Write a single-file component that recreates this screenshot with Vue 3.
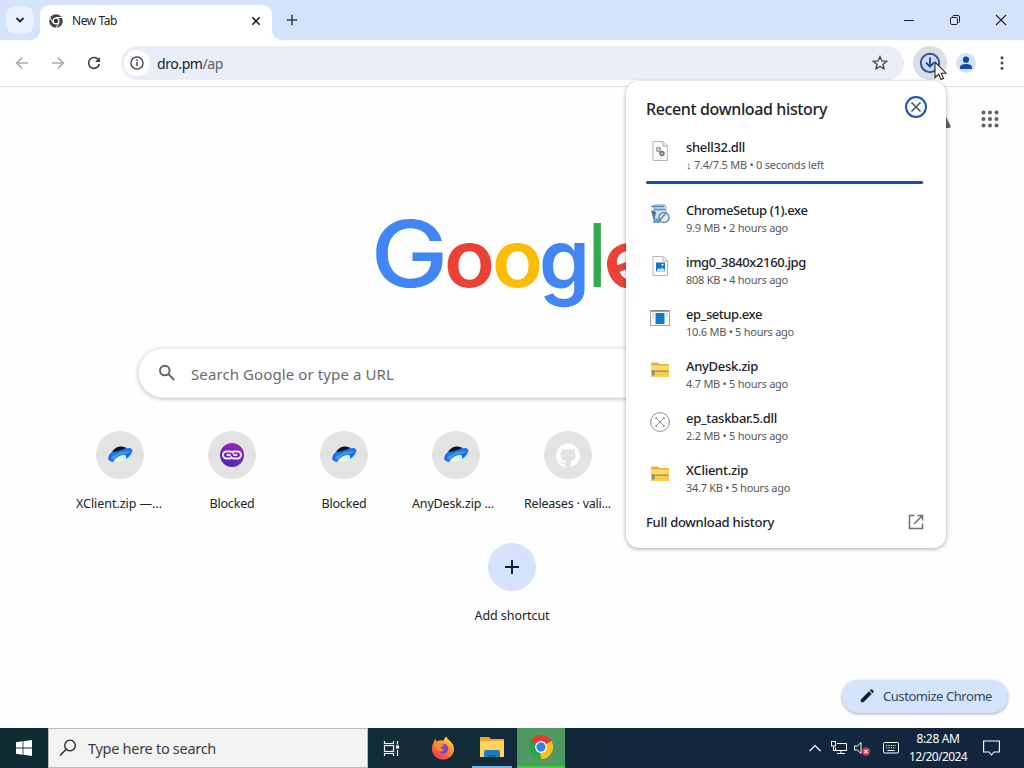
<script setup>
// Spreads a label's letters so that it occupies the given width in pixels.
const vFit = {
  mounted(el, binding) {
    const natural = el.getBoundingClientRect().width
    const count = el.textContent.length
    el.style.letterSpacing = `${(binding.value - natural) / count}px`
  },
}

const files = [
  { name: 'shell32.dll', nw: 59, info: '↓ 7.4/7.5 MB • 0 seconds left', iw: 138, icon: 'dll', progress: 99.6 },
  { name: 'ChromeSetup (1).exe', nw: 121.5, info: '9.9 MB • 2 hours ago', iw: 102, icon: 'setup' },
  { name: 'img0_3840x2160.jpg', nw: 120, info: '808 KB • 4 hours ago', iw: 102, icon: 'jpg' },
  { name: 'ep_setup.exe', nw: 76, info: '10.6 MB • 5 hours ago', iw: 108, icon: 'exe' },
  { name: 'AnyDesk.zip', nw: 72, info: '4.7 MB • 5 hours ago', iw: 102, icon: 'zip' },
  { name: 'ep_taskbar.5.dll', nw: 91, info: '2.2 MB • 5 hours ago', iw: 102, icon: 'blocked' },
  { name: 'XClient.zip', nw: 62, info: '34.7 KB • 5 hours ago', iw: 104, icon: 'zip' },
]
const tiles = [
  { label: 'XClient.zip —...', w: 86, icon: 'disk', cut: true },
  { label: 'Blocked', w: 45, icon: 'link' },
  { label: 'Blocked', w: 45, icon: 'disk' },
  { label: 'AnyDesk.zip ...', w: 82, icon: 'disk', cut: true },
  { label: 'Releases · vali...', w: 87, icon: 'github', cut: true },
]
const dots = [0, 1, 2, 3, 4, 5, 6, 7, 8]
</script>

<template>
  <div class="screen">
    <header class="tabs">
      <div class="tab-search"><svg width="12" height="12" viewBox="0 0 12 12"><path d="M2.5 4l3.5 3.5L9.500 4" fill="none" stroke="#1d2430" stroke-width="1.8" /></svg></div>
      <div class="tab">
        <svg width="14" height="14" viewBox="0 0 14 14">
          <circle cx="7" cy="7" r="6.800" fill="#44474b" /><circle cx="7" cy="7" r="3.500" fill="#fff" /><circle cx="7" cy="7" r="2.200" fill="#34373b" />
          <path d="M7 3.500h6.200M4 8.800L.9 3.500M10 8.800L7 14" stroke="#fff" stroke-width="1" />
        </svg>
        <span v-fit="45" class="tab-title">New Tab</span>
        <svg class="tab-close" width="10" height="10" viewBox="0 0 10 10"><path d="M1.300 1.300l7.400 7.400M8.700 1.300L1.300 8.700" stroke="#23272d" stroke-width="1.600" /></svg>
      </div>
      <svg class="new-tab" width="12" height="12" viewBox="0 0 12 12"><path d="M6 .8v10.400M.8 6h10.400" stroke="#35435d" stroke-width="1.600" /></svg>
      <div class="win">
        <svg width="12" height="12" viewBox="0 0 12 12"><path d="M1 6.500h10" stroke="#17202c" /></svg>
        <svg width="12" height="12" viewBox="0 0 12 12" fill="none" stroke="#17202c"><rect x="1.500" y="3.500" width="7" height="7" rx="1.300" /><path d="M3.500 3V2.500Q3.500 1.500 4.800 1.500H9q1.500 0 1.500 1.500v4.500q0 1-1 1" /></svg>
        <svg width="12" height="12" viewBox="0 0 12 12"><path d="M1 1l10 10M11 1L1 11" stroke="#17202c" stroke-width="1.100" /></svg>
      </div>
    </header>

    <div class="toolbar">
      <div class="nav">
        <svg width="16" height="16" viewBox="0 0 16 16" fill="none" stroke="#abadb0" stroke-width="1.500"><path d="M14 8H2.800M8 2.600L2.600 8 8 13.400" /></svg>
        <svg width="16" height="16" viewBox="0 0 16 16" fill="none" stroke="#abadb0" stroke-width="1.500"><path d="M2 8h11.200M8 2.600L13.400 8 8 13.400" /></svg>
        <svg width="16" height="16" viewBox="0 0 16 16"><path d="M12.600 5.100A5.400 5.400 0 1 0 13.300 9" fill="none" stroke="#3d4043" stroke-width="1.600" /><path d="M14 2v5H9z" fill="#3d4043" /></svg>
      </div>
      <div class="omnibox">
        <div class="site"><svg width="14" height="14" viewBox="0 0 14 14"><circle cx="7" cy="7" r="6.100" fill="none" stroke="#3b3e42" stroke-width="1.300" /><path d="M7 6v4.300M7 3.500v1.400" stroke="#3b3e42" stroke-width="1.400" /></svg></div>
        <span v-fit="66" class="url">dro.pm<i>/ap</i></span>
        <svg class="star" width="16" height="16" viewBox="0 0 16 16"><path d="M8 1.800l1.850 4.150 4.500.45-3.400 3 1 4.450L8 11.500l-3.950 2.350 1-4.450-3.400-3 4.500-.45z" fill="none" stroke="#45484e" stroke-width="1.400" /></svg>
      </div>
      <div class="download">
        <svg width="22" height="22" viewBox="0 0 22 22" fill="none"><circle cx="11" cy="11" r="9.200" stroke="#35528f" stroke-width="1.900" fill="#c9dbfa" /><path d="M11 5.500v9M7 10.700l4 4 4-4" stroke="#28498c" stroke-width="1.900" /></svg>
      </div>
      <div class="person"><svg width="14" height="14" viewBox="0 0 14 14" fill="#164ca8"><circle cx="7" cy="3.700" r="3.100" /><path d="M1 13v-1.800C1 8.800 4 8 7 8s6 .8 6 3.200V13z" /></svg></div>
      <svg class="kebab" width="4" height="14" viewBox="0 0 4 14" fill="#45484c"><circle cx="2" cy="1.700" r="1.500" /><circle cx="2" cy="7" r="1.500" /><circle cx="2" cy="12.300" r="1.500" /></svg>
    </div>

    <main class="page">
      <svg class="apps" width="18" height="18" viewBox="0 0 18 18" fill="#5f6368"><circle v-for="d in dots" :key="d" :cx="2.500 + (d % 3) * 6.500" :cy="2.500 + Math.floor(d / 3) * 6.500" r="2" /></svg>
      <svg class="flask" width="14" height="16" viewBox="0 0 14 16"><path d="M5 0h4v5l4.500 8.500Q14 16 12 16H2Q0 16 .5 13.500L5 5z" fill="#5f6368" /></svg>

      <svg class="logo" width="310" height="180" viewBox="364 167 310 180">
        <text x="370.500" y="287" font-size="92" font-weight="500" fill="#4285f4" textLength="78" lengthAdjust="spacingAndGlyphs">G</text>
        <text x="444" y="287.300" font-size="80" font-weight="600" fill="#ea4335" textLength="51" lengthAdjust="spacingAndGlyphs">o</text>
        <text x="492" y="287.300" font-size="80" font-weight="600" fill="#fbbc05" textLength="51" lengthAdjust="spacingAndGlyphs">o</text>
        <text x="539" y="289" font-size="84" font-weight="600" fill="#4285f4" textLength="51" lengthAdjust="spacingAndGlyphs">g</text>
        <text x="590.500" y="287" font-size="88.500" font-weight="700" fill="#34a853" textLength="13.500" lengthAdjust="spacingAndGlyphs">l</text>
        <text x="604" y="287.300" font-size="80" font-weight="600" fill="#ea4335" textLength="50" lengthAdjust="spacingAndGlyphs" transform="rotate(-20 629 266)">e</text>
      </svg>

      <div class="search">
        <svg width="18" height="18" viewBox="0 0 18 18" fill="none" stroke="#5f6266" stroke-width="1.900"><circle cx="6.800" cy="6.600" r="4.800" /><path d="M10.400 10.200l5.800 5.800" /></svg>
        <span v-fit="203">Search Google or type a URL</span>
      </div>

      <div class="tiles">
        <div v-for="(t, i) in tiles" :key="i" class="tile">
          <div class="disc">
            <svg v-if="t.icon === 'disk'" width="26" height="20" viewBox="0 0 26 20">
              <path d="M1 13Q2 8 7 6t16-3q3 1 2 4-2 5-6 7 .5-4-3-4-7 1-10 7-5-1-5-4z" fill="#1676e5" />
              <path d="M5 7Q8 2 13 1.500q3-.5 7 1.500L14 5q-4 2-9 2z" fill="#07132c" />
              <path d="M4 12q6-5 17-6l2 1q-3 2-6 2-6 0-11 6z" fill="#3a9cf8" />
              <path d="M8 17q1-5 9-7 2 0 2 2-2 3-6 4.500-3 1-5 .5z" fill="#edf5fb" />
            </svg>
            <svg v-else-if="t.icon === 'link'" width="24" height="24" viewBox="0 0 24 24">
              <defs><linearGradient id="violet" x1=".7" y1="0" x2=".2" y2="1"><stop offset="0" stop-color="#a21fb7" /><stop offset="1" stop-color="#3f2fae" /></linearGradient></defs>
              <circle cx="12" cy="12" r="12" fill="url(#violet)" />
              <path d="M10.500 15.500H6.500a3.500 3.500 0 0 1 0-7h4q1.500 0 2.500 1.500M13.500 8.500h4a3.500 3.500 0 0 1 0 7h-4q-1.500 0-2.500-1.500M7.500 12h2.500M14 12h2.500" fill="none" stroke="#f2e7fb" stroke-width="1.900" stroke-linecap="round" />
            </svg>
            <svg v-else width="24" height="24" viewBox="0 0 24 24" fill="#fff"><path d="M12 .5a12 12 0 0 0-3.800 23.400c.6.100.8-.3.800-.6v-2.200c-3.300.7-4-1.400-4-1.400-.6-1.400-1.400-1.800-1.400-1.800-1-.7.100-.7.100-.7 1.200.1 1.900 1.200 1.900 1.200 1 1.900 2.800 1.300 3.500 1 .1-.8.400-1.300.8-1.600-2.700-.3-5.500-1.300-5.500-5.900 0-1.300.5-2.400 1.200-3.200-.1-.3-.5-1.500.1-3.200 0 0 1-.3 3.300 1.200a11.500 11.500 0 0 1 6 0c2.300-1.500 3.300-1.200 3.300-1.200.7 1.700.2 2.900.1 3.200.8.800 1.200 1.900 1.200 3.200 0 4.600-2.800 5.600-5.500 5.900.4.400.8 1.100.8 2.200v3.300c0 .3.200.7.800.6A12 12 0 0 0 12 .5z" /></svg>
          </div>
          <div class="tile-label" :class="{ cut: t.cut }"><span v-fit="t.w">{{ t.label }}</span></div>
        </div>
      </div>
      <div class="tile add">
        <div class="disc"><svg width="14" height="14" viewBox="0 0 14 14"><path d="M7 0v14M0 7h14" stroke="#061d42" stroke-width="1.900" /></svg></div>
        <div class="tile-label"><span v-fit="75">Add shortcut</span></div>
      </div>
      <button class="customize">
        <svg width="14" height="14" viewBox="0 0 14 14" fill="#0d223f"><path d="M.8 10.500L9 2.300 11.700 5 3.500 13.200H.8zM9.800 1.500l1-1q.7-.6 1.400 0l1.300 1.300q.6.700 0 1.400l-1 1z" /></svg>
        <span v-fit="109">Customize Chrome</span>
      </button>
    </main>

    <footer class="taskbar">
      <div class="start"><svg width="16" height="16" viewBox="0 0 16 16" fill="#fff"><path d="M0 2.200L6.600 1.300V7.500H0zM7.400 1.200L16 0v7.500H7.400zM0 8.400h6.600v6.300L0 13.800zM7.400 8.400H16V16l-8.600-1.200z" /></svg></div>
      <div class="find">
        <svg width="18" height="18" viewBox="0 0 18 18" fill="none" stroke="#222" stroke-width="1.300"><circle cx="11" cy="6.500" r="5.300" /><path d="M7.200 10.300L1 16.500" /></svg>
        <span v-fit="128">Type here to search</span>
      </div>
      <div class="task view"><svg width="17" height="17" viewBox="0 0 17 17" fill="none" stroke="#eef3f5" stroke-width="1.200"><path d="M1.500 1v2.500h9V1M1.500 16v-2.500h9V16M14.500 1v3.500M14.500 10v6" /><rect x="1.500" y="5.500" width="9" height="6" /><rect x="13.500" y="6" width="2" height="2" fill="#fff" /></svg></div>
      <div class="task fox">
        <svg width="24" height="24" viewBox="0 0 24 24">
          <defs><linearGradient id="flame" x1=".8" y1="0" x2=".2" y2="1"><stop offset="0" stop-color="#ffe44d" /><stop offset=".4" stop-color="#ff9428" /><stop offset="1" stop-color="#f02a5c" /></linearGradient></defs>
          <path d="M3 5.500L4 3l2 2.500q3-2 6.500-.8Q13 2 15.500.5q.5 2 3 4 4.500 3.500 4.500 9A11 10.500 0 0 1 1 13Q.7 9 3 5.500z" fill="url(#flame)" />
          <circle cx="12.300" cy="12.800" r="5" fill="#7c45cc" /><path d="M4 8q3-2 6 0 2.500 0 4 1.500-4 .5-4 2.500.5 1.500 3 1.500-1 2.500-4.500 2Q4 14.500 4 8z" fill="#ff8a2b" />
        </svg>
      </div>
      <div class="task folder">
        <svg width="26" height="24" viewBox="0 0 26 24"><path d="M1 2h9l2 2h13v18H1z" fill="#eba928" /><path d="M1 6h24v16H1z" fill="#ffd461" /><path d="M5 22v-5q0-2 2-2h12q2 0 2 2v5z" fill="#217dc2" /><path d="M9 20h8v2H9z" fill="#14629f" /></svg>
      </div>
      <div class="task chrome">
        <svg width="24" height="24" viewBox="0 0 24 24">
          <path d="M12 12L1.600 6A12 12 0 0 1 22.400 6z" fill="#e33b2e" /><path d="M12 12L22.400 6A12 12 0 0 1 12 24z" fill="#fbc116" /><path d="M12 12v12A12 12 0 0 1 1.600 6z" fill="#2da44e" />
          <path d="M12 6h10.400l-8 4z" fill="#e33b2e" /><path d="M17.200 15L12 24l-1-8z" fill="#fbc116" /><path d="M6.800 15L1.600 6l8 4z" fill="#2da44e" />
          <circle cx="12" cy="12" r="5.900" fill="#fff" /><circle cx="12" cy="12" r="4.700" fill="#3b80ee" />
        </svg>
      </div>
      <div class="tray">
        <svg class="t1" width="12" height="8" viewBox="0 0 12 8" fill="none" stroke="#fff" stroke-width="1.200"><path d="M.5 7L6 1.500 11.500 7" /></svg>
        <svg class="t2" width="17" height="14" viewBox="0 0 17 14" fill="none" stroke="#fff"><path d="M6 2.500h9.500v7H4.500v-3M10 9.500v3M6 12.500h8M2.500 5.500v4h2" /><rect x=".5" y=".5" width="4" height="4.500" /></svg>
        <svg class="t3" width="17" height="15" viewBox="0 0 17 15"><path d="M.5 5h2.800L7 1.500v11L3.300 9H.5z" fill="none" stroke="#fff" /><circle cx="12" cy="10.500" r="4.300" fill="#d8333f" /><path d="M10.300 8.800l3.400 3.400M13.700 8.800l-3.400 3.400" stroke="#fff" stroke-width="1.200" /></svg>
        <svg class="t4" width="16" height="12" viewBox="0 0 16 12" fill="none" stroke="#fff"><rect x=".5" y=".5" width="15" height="10.500" rx="1" /><path d="M3 3.500h10M3 5.800h10" stroke-dasharray="1.200 1.200" /><path d="M4.500 8.500h7" /></svg>
        <div class="clock"><span v-fit="43">8:28 AM</span><span v-fit="58">12/20/2024</span></div>
        <svg class="t5" width="17" height="16" viewBox="0 0 17 16" fill="none" stroke="#fff" stroke-width="1.100"><path d="M.6 1h15.800v11H11l-2.500 3L6 12H.6z" /></svg>
      </div>
    </footer>

    <section class="popup">
      <div class="popup-head">
        <h2 v-fit="181">Recent download history</h2>
        <svg width="24" height="24" viewBox="0 0 24 24"><circle cx="12" cy="12" r="10" fill="#eef8ff" stroke="#2353a5" stroke-width="2" /><path d="M7.500 7.500l9 9M16.500 7.500l-9 9" stroke="#55524f" stroke-width="1.500" /></svg>
      </div>
      <div v-for="f in files" :key="f.name" class="file" :class="{ active: f.progress }">
        <div class="file-icon">
          <svg v-if="f.icon === 'dll'" width="20" height="20" viewBox="0 0 20 20"><path d="M3 .5h10L17.500 5v14.500H3z" fill="#fafafa" stroke="#b5b5b5" /><path d="M13 .5V5h4.500" fill="none" stroke="#aaa" /><circle cx="8.500" cy="8.500" r="1.800" fill="none" stroke="#a0a3a6" stroke-width="1.800" /><circle cx="12" cy="12.500" r="1.800" fill="none" stroke="#777b7e" stroke-width="1.900" /></svg>
          <svg v-else-if="f.icon === 'setup'" width="20" height="20" viewBox="0 0 20 20"><path d="M4 1h11l1 3v11H4z" fill="#c9e0f2" stroke="#8aa5be" /><path d="M1 2.500h13M4 5.500h11" stroke="#5d8bbd" stroke-width="1.500" /><path d="M1 6l5 2-2 9z" fill="#486c9f" /><path d="M4 15h6v4H3z" fill="#6b9fc4" /><circle cx="14" cy="13.500" r="5" fill="#e3ecf4" stroke="#7089bd" stroke-width="1.500" /><path d="M9 17l7-8" stroke="#58a078" stroke-width="1.800" /></svg>
          <svg v-else-if="f.icon === 'jpg'" width="20" height="20" viewBox="0 0 20 20"><path d="M3 .5h10L17.500 5v14.500H3z" fill="#fff" stroke="#b5b5b5" /><path d="M13 .5V5h4.500" fill="none" stroke="#aaa" /><rect x="6" y="6.500" width="9" height="9" fill="#1976bd" /><path d="M6 15.500l3-3.500 1.500 1.500 1.500-2 3 3v1z" fill="#d5ecfa" /><circle cx="12.500" cy="8.700" r="1" fill="#fff" /></svg>
          <svg v-else-if="f.icon === 'exe'" width="20" height="20" viewBox="0 0 20 20"><rect x=".5" y="2.500" width="19" height="15" fill="#fff" stroke="#9fa4a9" /><path d="M1 3h18" stroke="#788793" stroke-width="1.500" /><rect x="5.500" y="5" width="9" height="11" fill="#147ac8" /><path d="M2 6h2M2 8h2M2 10h2M16 6h2M16 8h2" stroke="#adb6bd" /></svg>
          <svg v-else-if="f.icon === 'zip'" width="20" height="20" viewBox="0 0 20 20"><path d="M1 2.500h7L9.500 4H19v13H1z" fill="#e8b33a" /><path d="M1 5.500h18v5H1z" fill="#ffd96a" /><path d="M1 12h18v5H1z" fill="#f6cd50" /><path d="M3 11.300h15" stroke="#9a9172" stroke-width="1.400" stroke-dasharray="2 .7" /><rect x="2" y="10.500" width="2.600" height="5" fill="#8c8c83" /></svg>
          <svg v-else width="20" height="20" viewBox="0 0 20 20" fill="none" stroke="#8d8d8d"><circle cx="10" cy="10" r="9.400" /><path d="M6 6l8 8M14 6l-8 8M5 6.500Q7 6.500 6.500 5M13.500 5q0 2 1.500 1.500M5 13.500q2 0 1.500 1.500M13.500 15q0-2 1.500-1.500" /></svg>
        </div>
        <div class="file-text">
          <strong v-fit="f.nw">{{ f.name }}</strong>
          <small v-fit="f.iw">{{ f.info }}</small>
        </div>
        <div v-if="f.progress" class="bar"><div class="fill" :style="{ width: f.progress + '%' }"></div></div>
      </div>
      <div class="full">
        <strong v-fit="128">Full download history</strong>
        <svg width="16" height="16" viewBox="0 0 16 16" fill="none" stroke="#6c6f72" stroke-width="1.500"><path d="M6.500 1.500h-5v13h13v-5M9.500 1.500h5v5M14.500 1.500L6 10" /></svg>
      </div>
    </section>

    <svg class="cursor" width="13" height="20" viewBox="0 0 13 20"><path d="M1 1v15.500l3.700-3.400 2.300 5.500 2.500-1.100-2.300-5.300H12z" fill="#fff" stroke="#222" stroke-width="1.100" /></svg>
  </div>
</template>

<style>
body { margin: 0; overflow: hidden; }
</style>

<style scoped>
.screen { position: relative; width: 1024px; height: 768px; display: flex; flex-direction: column; overflow: hidden; background: #fff; color: #202327; font: 13px "Noto Sans", "Open Sans", sans-serif; }
svg { display: block; flex: none; }
span, strong, small, h2 { white-space: nowrap; }
.tabs { height: 40px; display: flex; align-items: center; background: #d5e3fc; flex: none; }
.tab-search { width: 28px; height: 28px; margin-left: 6px; border-radius: 9px; background: #e9f0fd; display: flex; align-items: center; justify-content: center; }
.tab { position: relative; align-self: flex-end; width: 232px; height: 35px; margin-left: 6px; padding: 0 11px 4px 9px; box-sizing: border-box; display: flex; align-items: center; background: #fff; border-radius: 9px 9px 0 0; }
.tab::before, .tab::after { content: ""; position: absolute; bottom: 0; width: 9px; height: 9px; }
.tab::before { left: -9px; background: radial-gradient(circle at 0 0, transparent 8.500px, #fff 9px); }
.tab::after { right: -9px; background: radial-gradient(circle at 100% 0, transparent 8.500px, #fff 9px); }
.tab-title { margin-left: 9px; font-size: 12px; }
.tab-close { margin-left: auto; }
.new-tab { margin-left: 14px; }
.win { display: flex; gap: 34px; margin-left: auto; margin-right: 17px; }
.toolbar { height: 46px; flex: none; display: flex; align-items: center; border-bottom: 1px solid #dfe0e2; background: #fff; }
.nav { display: flex; gap: 20px; padding-left: 14px; }
.omnibox { width: 783px; height: 34px; margin-left: 19px; box-sizing: border-box; border-radius: 17px; background: #e9eef8; display: flex; align-items: center; padding: 0 16px 0 3px; }
.site { width: 26px; height: 26px; border-radius: 50%; background: #fff; display: flex; align-items: center; justify-content: center; }
.url { margin-left: 7px; font-size: 14px; }
.url i { font-style: normal; color: #5b6068; }
.star { margin-left: auto; }
.download { width: 34px; height: 34px; margin-left: 9px; border-radius: 50%; background: #dbdfe2; display: flex; align-items: center; justify-content: center; }
.person { width: 20px; height: 20px; margin-left: 9px; border-radius: 50%; background: #d2e3fc; display: flex; align-items: center; justify-content: center; }
.kebab { margin-left: 24px; }
.page { position: relative; flex: 1; background: #fefefe; display: flex; flex-direction: column; }
.apps { position: absolute; right: 25px; top: 23px; }
.flask { position: absolute; left: 937px; top: 25px; }
.logo { margin: 80px 0 0 364px; font-family: Inter, sans-serif; }
.search { width: 748px; height: 50px; margin: 1px 0 0 138px; box-sizing: border-box; border: 1px solid #efefef; border-radius: 25px; background: #fff; box-shadow: 0 1px 4px rgba(50, 50, 50, .3); display: flex; align-items: center; padding-left: 19px; font-size: 15px; color: #686b6e; flex: none; }
.search span { margin-left: 15px; padding-top: 2px; }
.tiles { display: flex; margin: 33px 0 0 64px; }
.tile { width: 112px; display: flex; flex-direction: column; align-items: center; line-height: 18px; color: #202225; font-size: 12.500px; }
.tile-label { width: 88px; display: flex; justify-content: center; }
.tile-label.cut { justify-content: flex-start; }
.disc { width: 48px; height: 48px; border-radius: 50%; background: #e3e3e4; display: flex; align-items: center; justify-content: center; margin-bottom: 16px; }
.add { margin: 30px auto 0; }
.add .disc { background: #d5e3fc; }
.customize { position: absolute; left: 842px; top: 593px; width: 166px; height: 33px; border: 0; border-radius: 17px; background: #d5e3fb; box-shadow: 0 1px 3px rgba(30, 40, 60, .4); display: flex; align-items: center; padding: 0 0 1px 18px; gap: 9px; font: 13px "Noto Sans", sans-serif; color: #354765; }
.taskbar { height: 40px; flex: none; display: flex; background: linear-gradient(90deg, #102c32 0, #132c38 40%, #12283e 65%, #11263d 100%); color: #fff; }
.start { width: 48px; display: flex; align-items: center; justify-content: center; }
.find { width: 320px; box-sizing: border-box; border: 1px solid #b9bbbb; background: #f3f3f3; display: flex; align-items: center; padding-left: 10px; font-size: 14.500px; color: #3b3d3f; }
.find span { margin-left: 11px; }
.task { box-sizing: border-box; display: flex; align-items: center; justify-content: center; }
.view { width: 48px; padding-right: 1px; }
.fox { width: 54px; }
.folder { width: 40px; margin-left: 2px; border-bottom: 2px solid #6db6e8; }
.chrome { width: 48px; margin-left: 5px; background: #4f985f; border-bottom: 2px solid #44ce35; }
.tray { flex: 1; display: flex; align-items: center; padding-left: 244px; }
.t2 { margin-left: 10px; }
.t3 { margin-left: 6px; }
.t4 { margin-left: 12px; }
.clock { width: 70px; margin-left: 4px; display: flex; flex-direction: column; align-items: center; font-size: 12px; line-height: 18px; }
.t5 { margin-left: 10px; }
.popup { position: absolute; left: 626px; top: 81px; width: 320px; height: 467px; box-sizing: border-box; border-radius: 13px; background: #fff; box-shadow: 0 1px 4px rgba(0, 0, 0, .34); padding: 14px 22px 0 20px; }
.popup-head { display: flex; justify-content: space-between; height: 39px; margin-right: -4px; }
.popup-head h2 { margin: 3px 0 0; font-size: 16px; line-height: 22px; font-weight: 500; }
.file { height: 52px; display: flex; flex-wrap: wrap; align-content: flex-start; }
.active { height: 63px; }
.file-icon { width: 40px; padding: 7px 0 0 4px; box-sizing: border-box; }
.file-text { width: 220px; height: 47px; display: flex; flex-direction: column; align-items: flex-start; }
strong { font-size: 13px; line-height: 18px; font-weight: 500; margin-top: 4px; }
small { font-size: 11px; line-height: 18px; color: #56595c; }
.bar { width: 278px; height: 3px; border-radius: 2px; background: #d8e5fa; }
.fill { height: 3px; border-radius: 2px; background: #174fa5; }
.full { display: flex; justify-content: space-between; align-items: center; margin-top: 1px; height: 24px; }
.full strong { margin: 0; }
.cursor { position: absolute; left: 934px; top: 61px; }
</style>
